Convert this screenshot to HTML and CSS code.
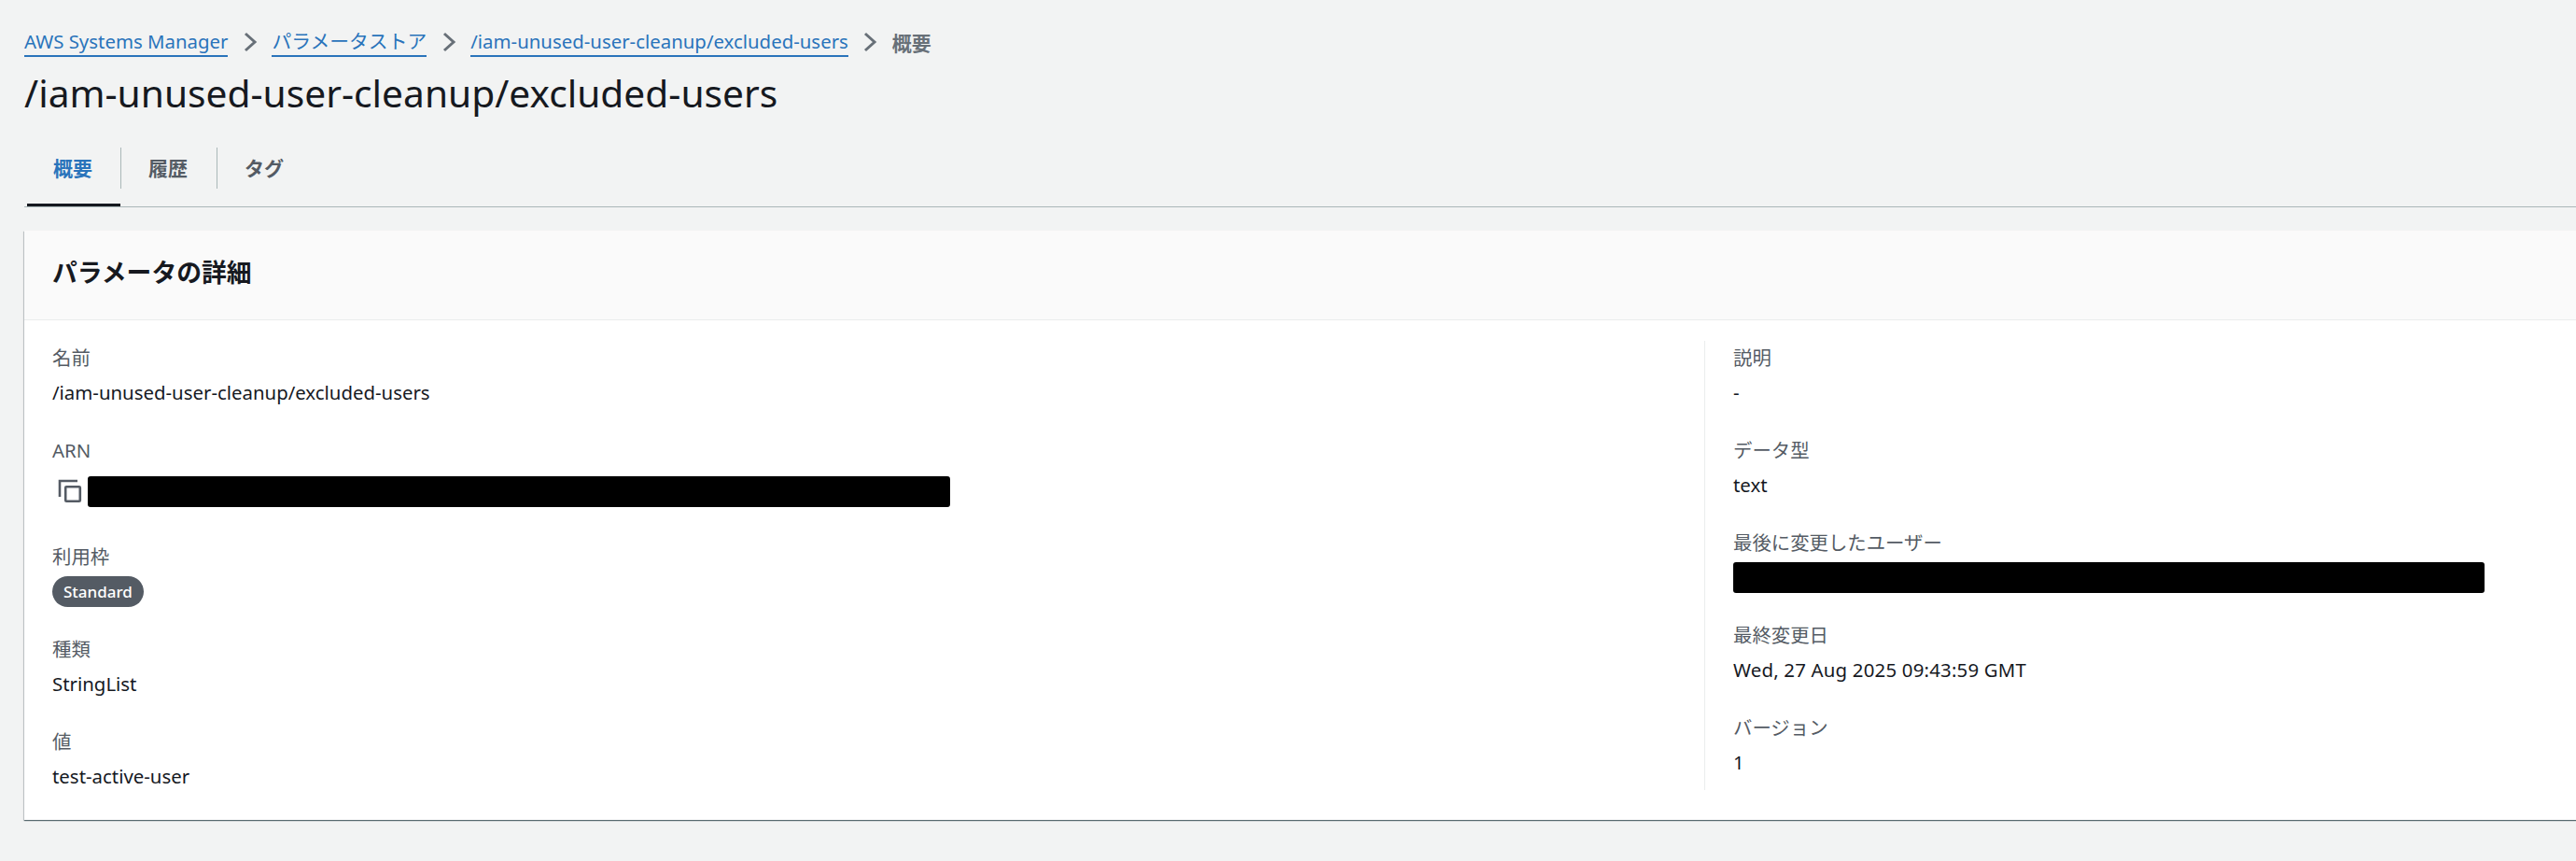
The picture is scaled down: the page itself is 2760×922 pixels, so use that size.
FILE: index.html
```html
<!DOCTYPE html>
<html lang="ja">
<head>
    <meta charset="UTF-8">
    <meta name="viewport" content="width=device-width, initial-scale=1.0">
    <title>/iam-unused-user-cleanup/excluded-users</title>
    <link rel="stylesheet" href="styles.css">
</head>
<body>
    <nav class="breadcrumbs">
        <a href="#">AWS Systems Manager</a>
        <svg class="crumb-sep" viewBox="0 0 16 24"><path d="M3 3l10 9-10 9"/></svg>
        <a class="crumb-ja" href="#">パラメータストア</a>
        <svg class="crumb-sep" viewBox="0 0 16 24"><path d="M3 3l10 9-10 9"/></svg>
        <a href="#">/iam-unused-user-cleanup/excluded-users</a>
        <svg class="crumb-sep" viewBox="0 0 16 24"><path d="M3 3l10 9-10 9"/></svg>
        <span class="crumb-current">概要</span>
    </nav>

    <h1 class="page-title">/iam-unused-user-cleanup/excluded-users</h1>

    <div class="tabs">
        <div class="tab active"><span>概要</span></div>
        <div class="tab"><span>履歴</span></div>
        <div class="tab"><span>タグ</span></div>
    </div>

    <section class="card">
        <div class="card-header">
            <h2>パラメータの詳細</h2>
        </div>
        <div class="card-body">
            <div class="col col-left">
                <div class="field">
                    <div class="label">名前</div>
                    <div class="value">/iam-unused-user-cleanup/excluded-users</div>
                </div>
                <div class="field">
                    <div class="label">ARN</div>
                    <div class="arn-row">
                        <svg class="copy-icon" viewBox="0 0 26 26"><path d="M2 19V2h19"/><rect x="8.2" y="8.2" width="15.6" height="15.6" rx="1"/></svg>
                        <div class="redacted arn-redacted"></div>
                    </div>
                </div>
                <div class="field">
                    <div class="label">利用枠</div>
                    <div class="badge-row"><span class="badge">Standard</span></div>
                </div>
                <div class="field">
                    <div class="label">種類</div>
                    <div class="value">StringList</div>
                </div>
                <div class="field">
                    <div class="label">値</div>
                    <div class="value">test-active-user</div>
                </div>
            </div>
            <div class="col col-right">
                <div class="field">
                    <div class="label">説明</div>
                    <div class="value">-</div>
                </div>
                <div class="field">
                    <div class="label">データ型</div>
                    <div class="value">text</div>
                </div>
                <div class="field">
                    <div class="label">最後に変更したユーザー</div>
                    <div class="user-row"><div class="redacted user-redacted"></div></div>
                </div>
                <div class="field">
                    <div class="label">最終変更日</div>
                    <div class="value value-date">Wed, 27 Aug 2025 09:43:59 GMT</div>
                </div>
                <div class="field">
                    <div class="label">バージョン</div>
                    <div class="value">1</div>
                </div>
            </div>
        </div>
    </section>
</body>
</html>
```

FILE: styles.css
```css
* {
    margin: 0;
    padding: 0;
    box-sizing: border-box;
}

html, body {
    height: 100%;
    overflow: hidden;
}

body {
    background: #f2f3f3;
    color: #16191f;
    font-family: "Noto Sans", "Noto Sans CJK JP", sans-serif;
    font-size: 20.4px;
    padding: 0 0 0 26px;
}

.breadcrumbs {
    display: flex;
    align-items: center;
    height: 37px;
    margin-top: 26px;
}

.breadcrumbs a {
    color: #2a74bb;
    text-decoration: none;
    border-bottom: 2px solid #2a74bb;
    line-height: 30px;
}

.breadcrumbs .crumb-ja {
    font-size: 20.8px;
}

.crumb-sep {
    width: 16px;
    height: 24px;
    margin: 0 15.5px;
    fill: none;
    stroke: #687078;
    stroke-width: 3;
}

.crumb-current {
    color: #687078;
    font-size: 21px;
    font-weight: 700;
}

.page-title {
    font-size: 40.7px;
    font-weight: 400;
    line-height: 58px;
    margin-top: 7px;
}

.tabs {
    display: flex;
    height: 94px;
    border-bottom: 1px solid #aab7b8;
    align-items: flex-end;
}

.tab {
    width: 103px;
    height: 63px;
    padding: 7px 0 0 30px;
    color: #545b64;
    font-size: 21px;
    font-weight: 700;
    position: relative;
    line-height: 30px;
}

.tab + .tab::before {
    content: "";
    position: absolute;
    left: 0;
    top: 0;
    height: 44px;
    width: 1px;
    background: #aab7b8;
}

.tab.active {
    color: #2a74bb;
    border-bottom: 3px solid #16191f;
    margin-left: 3px;
    width: 100px;
    padding-left: 28px;
}

.card {
    margin-top: 25px;
    margin-right: -20px;
    height: 631px;
    background: #fff;
    box-shadow: 0 1px 1px 0 rgba(0, 28, 36, 0.5), 1px 1px 1px 0 rgba(0, 28, 36, 0.15), -1px 1px 1px 0 rgba(0, 28, 36, 0.15);
}

.card-header {
    height: 96px;
    background: #fafafa;
    border-bottom: 1px solid #eaeded;
    padding: 0 30px 8px;
    display: flex;
    align-items: center;
}

.card-header h2 {
    font-size: 26.8px;
    font-weight: 700;
}

.card-body {
    display: grid;
    grid-template-columns: 1800px 1fr;
    padding-top: 23px;
}

.col-left {
    padding-left: 30px;
}

.col-right {
    border-left: 1px solid #eaeded;
    padding-left: 30px;
    height: 481px;
    margin-top: -1px;
    padding-top: 1px;
}

.field {
    margin-bottom: 25px;
}

.label {
    color: #545b64;
    line-height: 35px;
    padding-bottom: 2px;
}

.value {
    line-height: 35px;
    padding-bottom: 2px;
}

.value-date {
    letter-spacing: 0.2px;
}

.arn-row {
    display: flex;
    align-items: flex-start;
    height: 52px;
    padding-top: 8px;
}

.copy-icon {
    width: 26px;
    height: 26px;
    margin: 3px 6px 0;
    fill: none;
    stroke: #545b64;
    stroke-width: 2.6;
}

.redacted {
    background: #000;
    border-radius: 3px;
    height: 33px;
}

.arn-redacted {
    width: 924px;
}

.user-row {
    height: 37px;
    padding-top: 1px;
}

.user-redacted {
    width: 805px;
}

.badge-row {
    height: 37px;
    padding-top: 1px;
    display: flex;
    align-items: flex-start;
}

.badge {
    display: block;
    background: #545b64;
    color: #fff;
    border-radius: 17px;
    height: 33px;
    line-height: 33px;
    padding: 0 12px;
    font-size: 17px;
    font-weight: 500;
}
```
